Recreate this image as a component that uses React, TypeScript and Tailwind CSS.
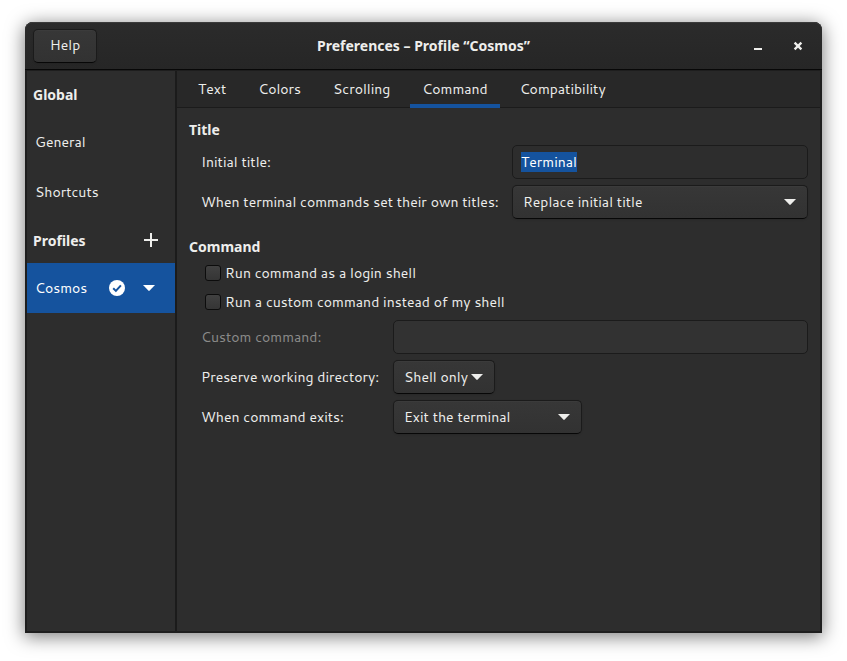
import { useEffect, useRef, useState } from "react";

const font = "font-['Cantarell','Noto_Sans','Open_Sans',sans-serif]";
const strong = "font-['Noto_Sans','Open_Sans',sans-serif] font-bold";
const raised =
  "border border-[#1b1b1b] border-b-[#070707] rounded-[5px] bg-linear-to-b from-[#373737] to-[#323232] shadow-[inset_0_1px_#3b3b3b,0_1px_2px_rgba(0,0,0,0.1)] text-[#eeeeec]";

function Arrow() {
  return (
    <svg aria-hidden="true" viewBox="0 0 12 6" className="block h-[6px] w-3 fill-current">
      <path d="M0 0h12L6.7 5.6q-.7.6-1.4 0z" />
    </svg>
  );
}

type PickerProps = { id: string; options: string[]; size: string; compact?: boolean };

function Picker({ id, options, size, compact }: PickerProps) {
  return (
    <div className={`relative ${size}`}>
      <select
        id={id}
        className={`h-[34px] w-full appearance-none pl-2.5 outline-none ${compact ? "pr-5" : "pr-7"} ${raised}`}
      >
        {options.map((o) => (
          <option key={o}>{o}</option>
        ))}
      </select>
      <span className="pointer-events-none absolute inset-y-0 right-3 flex items-center text-[#eeeeec]">
        <Arrow />
      </span>
    </div>
  );
}

function Check({ id, label }: { id: string; label: string }) {
  return (
    <div className="flex h-[22px] items-center gap-1 pl-4">
      <input
        id={id}
        type="checkbox"
        className="size-4 appearance-none rounded-[3px] border border-[#0c0c0c] bg-linear-to-b from-[#414141] to-[#353535] checked:bg-[#15539e]"
      />
      <label htmlFor={id}>{label}</label>
    </div>
  );
}

const tabs = ["Text", "Colors", "Scrolling", "Command", "Compatibility"];

export default function App() {
  const title = useRef<HTMLInputElement>(null);
  const [active, setActive] = useState("Command");

  useEffect(() => {
    title.current?.focus();
    title.current?.select();
  }, []);

  return (
    <div className={`flex min-h-screen bg-white px-[25px] pt-[22px] pb-7 text-sm leading-[19px] text-[#eeeeec] ${font}`}>
      <div className="flex min-w-0 flex-1 flex-col rounded-t-lg bg-[#1f1f1f] shadow-[0_3px_18px_1px_rgba(0,0,0,0.5)]">
        <header className="grid h-12 grid-cols-[1fr_auto_1fr] items-center rounded-t-lg border-b border-[#070707] bg-linear-to-b from-[#2b2b2b] to-[#262626] px-2 shadow-[inset_0_1px_#3a3a3a]">
          <button type="button" className={`h-[34px] w-16 justify-self-start ${raised}`}>
            Help
          </button>
          <h1 className={strong}>Preferences – Profile “Cosmos”</h1>
          <div className="flex justify-end gap-4 pr-1">
            <button type="button" aria-label="Minimize" className="flex size-6 items-center justify-center">
              <svg viewBox="0 0 16 16" className="size-4">
                <path d="M4 10h8v2H4z" fill="#eeeeec" />
              </svg>
            </button>
            <button type="button" aria-label="Close" className="flex size-6 items-center justify-center">
              <svg viewBox="0 0 16 16" className="size-4">
                <path d="M4.6 4.6l6.8 6.8M11.4 4.6l-6.8 6.8" stroke="#eeeeec" strokeWidth="2.3" />
              </svg>
            </button>
          </div>
        </header>

        <div className="flex flex-1 border-2 border-t border-[#1e1e1e]">
          <aside className="w-[150px] shrink-0 border-r-2 border-[#1b1b1b] bg-[#2d2d2d]">
            <h2 className={`flex h-[46px] items-center pl-1.5 ${strong}`}>Global</h2>
            <button type="button" className="flex h-[50px] w-full items-center pl-2">
              General
            </button>
            <button type="button" className="flex h-[50px] w-full items-center pl-2">
              Shortcuts
            </button>
            <div className="flex h-[46px] items-center justify-between pr-4 pl-1.5">
              <h2 className={strong}>Profiles</h2>
              <button type="button" aria-label="Add profile">
                <svg viewBox="0 0 16 16" className="block size-4">
                  <path d="M7 1h2v6h6v2H9v6H7V9H1V7h6z" fill="#eeeeec" />
                </svg>
              </button>
            </div>
            <div className="flex h-[50px] items-center bg-[#15539e] pr-5 pl-2 text-white">
              <button type="button" className="flex-1 text-left">
                Cosmos
              </button>
              <svg viewBox="0 0 16 16" className="mr-[18px] size-4">
                <circle cx="8" cy="8" r="8" fill="#fff" />
                <path d="M4.2 8.2l2.7 2.7 5-5.6" fill="none" stroke="#15539e" strokeWidth="2" />
              </svg>
              <button type="button" aria-label="Profile menu">
                <Arrow />
              </button>
            </div>
          </aside>

          <main className="min-w-0 flex-1 bg-[#2d2d2d]">
            <div role="tablist" className="flex h-[37px] gap-2 border-b border-[#1b1b1b] bg-[#282828] pl-[9px]">
              {tabs.map((t) => (
                <button
                  key={t}
                  type="button"
                  role="tab"
                  aria-selected={t === active}
                  onClick={() => setActive(t)}
                  className={`-mb-px border-b-4 px-3 pt-[3px] ${t === active ? "border-[#15539e]" : "border-transparent"}`}
                >
                  {t}
                </button>
              ))}
            </div>

            <div className="flex flex-col gap-[18px] p-3">
              <section className="flex flex-col gap-1.5">
                <h2 className={strong}>Title</h2>
                <div className="grid grid-cols-[299px_1fr] items-center gap-x-3 gap-y-1.5 pl-3">
                  <label htmlFor="initial">Initial title:</label>
                  <input
                    id="initial"
                    ref={title}
                    defaultValue="Terminal"
                    className="h-[34px] w-full min-w-0 rounded-[5px] border border-[#1b1b1b] bg-[#2d2d2d] px-2 outline-none selection:bg-[#15539e] selection:text-white"
                  />
                  <label htmlFor="mode" className="whitespace-nowrap">
                    When terminal commands set their own titles:
                  </label>
                  <Picker id="mode" size="w-full" options={["Replace initial title", "Keep initial title"]} />
                </div>
              </section>

              <section className="flex flex-col gap-1.5">
                <h2 className={strong}>Command</h2>
                <div className="flex flex-col gap-[7px] pb-px">
                  <Check id="login" label="Run command as a login shell" />
                  <Check id="custom" label="Run a custom command instead of my shell" />
                </div>
                <div className="grid grid-cols-[180px_1fr] items-center gap-x-3 gap-y-1.5 pl-3">
                  <label htmlFor="command" className="text-[#8b8b8a]">
                    Custom command:
                  </label>
                  <input
                    id="command"
                    disabled
                    className="h-[34px] w-full min-w-0 rounded-[5px] border border-[#1b1b1b] bg-[#323232] px-2"
                  />
                  <label htmlFor="directory" className="whitespace-nowrap">
                    Preserve working directory:
                  </label>
                  <Picker id="directory" size="w-[102px]" compact options={["Shell only", "Always", "Never"]} />
                  <label htmlFor="exits">When command exits:</label>
                  <Picker id="exits" size="w-[189px]" options={["Exit the terminal", "Restart the command"]} />
                </div>
              </section>
            </div>
          </main>
        </div>
      </div>
    </div>
  );
}
